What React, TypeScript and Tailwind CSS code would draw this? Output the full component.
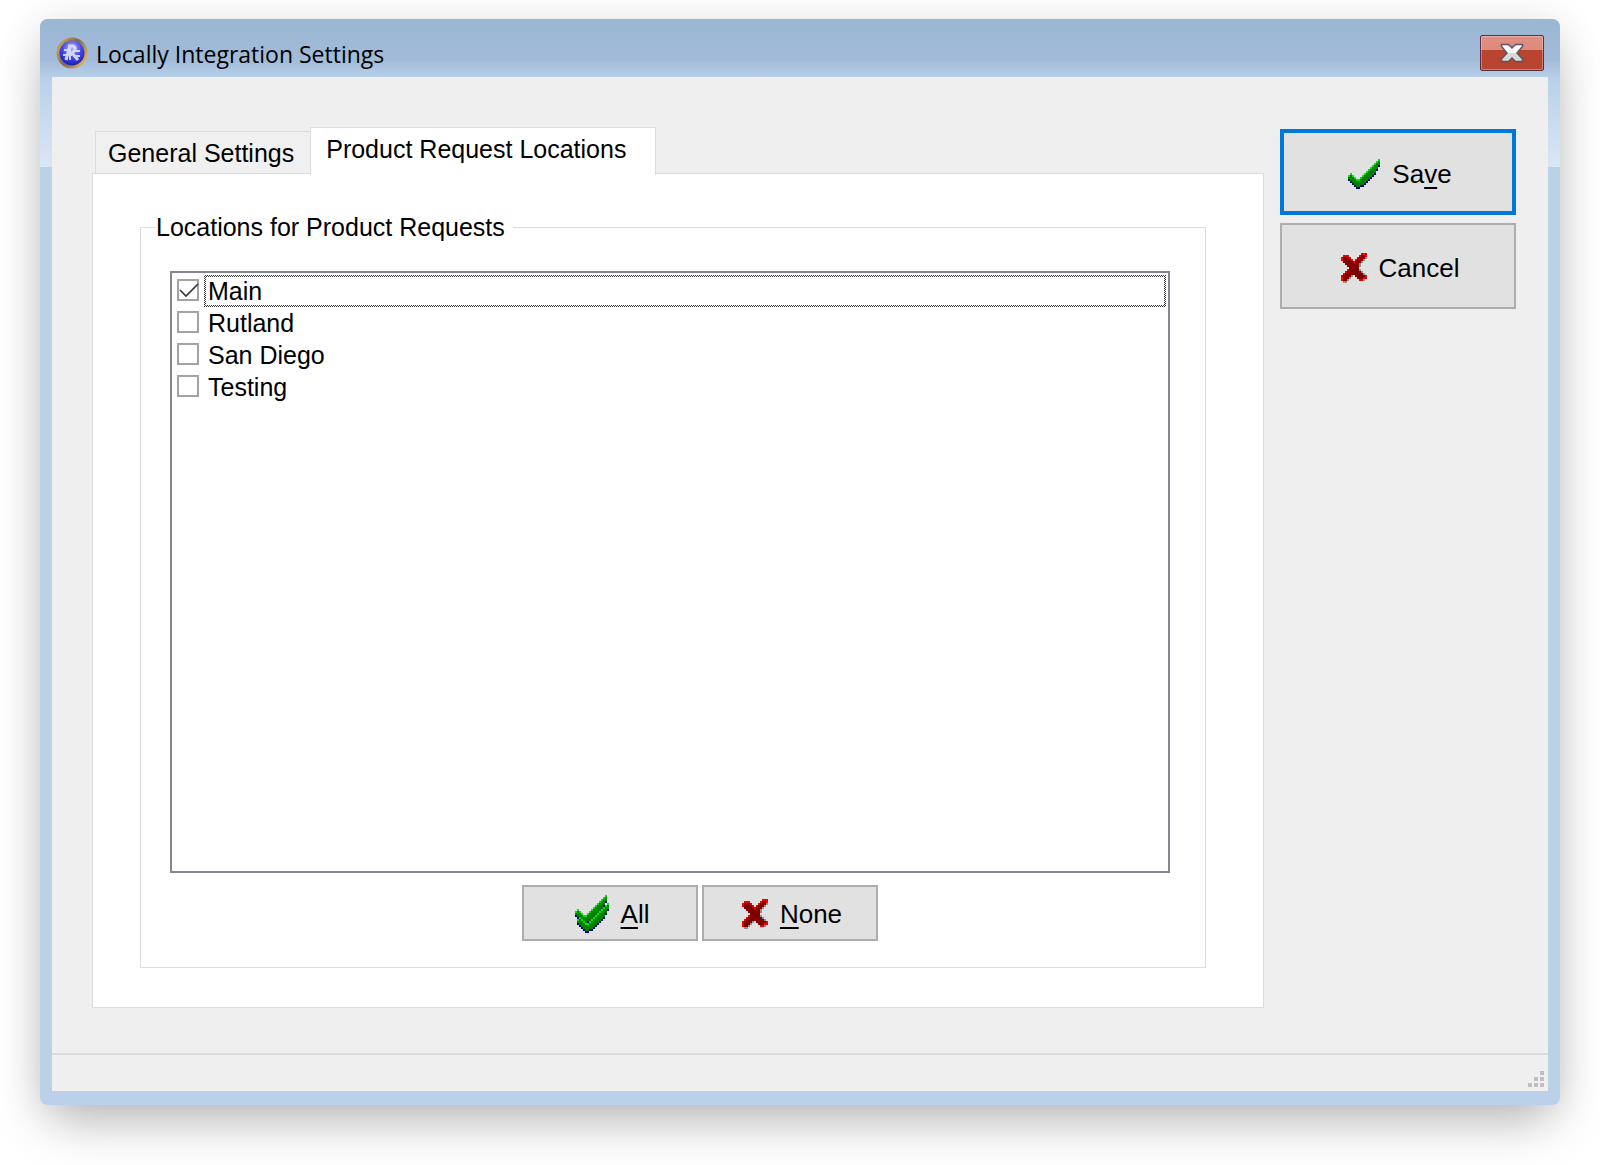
import { useState } from 'react';

const TABS = ['General Settings', 'Product Request Locations'];

const LOCATIONS = [
  { id: 'main', name: 'Main', checked: true },
  { id: 'rutland', name: 'Rutland', checked: false },
  { id: 'san-diego', name: 'San Diego', checked: false },
  { id: 'testing', name: 'Testing', checked: false },
];

// First and last filled row of every column of the 16x15 check bitmap
const CHECK_COLUMNS = [
  [8, 10], [7, 11], [8, 12], [9, 13], [10, 14], [10, 14], [9, 13], [8, 13],
  [7, 12], [6, 11], [5, 10], [4, 9], [3, 8], [2, 7], [1, 5], [0, 3],
];

// R = bright edge, D = body, G = shadow
const CROSS_ROWS = [
  '..........RRR',
  '.RRR.....RDDR',
  'RDDDR...RDDDG',
  'RDDDDR.RDDDG.',
  '.DDDDDRDDDG..',
  '..DDDDDDDG...',
  '...DDDDDDG...',
  '....DDDDD....',
  '...RDDDDDG...',
  '..RDDDDDDDG..',
  '.RDDDDDDDDDG.',
  'RDDDDG.DDDDDR',
  'RDDDG...DDDRR',
  'RDDG.....RRG.',
  '.GG..........',
];

const CROSS_COLORS: Record<string, string> = { R: '#f00000', D: '#800000', G: '#909090' };

function AppIcon() {
  return (
    <svg className="size-8 shrink-0" viewBox="0 0 32 32" aria-hidden="true">
      <defs>
        <linearGradient id="ring" x1="0" y1="0" x2="1" y2="0.6">
          <stop offset="0" stopColor="#7d6d50" />
          <stop offset="0.2" stopColor="#c39a55" />
          <stop offset="0.55" stopColor="#7b6a4c" />
          <stop offset="1" stopColor="#e0ae5c" />
        </linearGradient>
        <radialGradient id="globe" cx="0.5" cy="0.3" r="0.7">
          <stop offset="0" stopColor="#b4b6f0" />
          <stop offset="0.55" stopColor="#4347e8" />
          <stop offset="1" stopColor="#1a1cae" />
        </radialGradient>
      </defs>
      <circle cx="16" cy="16" r="15.5" fill="url(#ring)" />
      <circle cx="16" cy="16" r="12.5" fill="url(#globe)" />
      <g fill="none" stroke="#dddff8" opacity="0.9">
        <path d="M14 8l-4 15M12 9h5q3 1 2 4l-3 3 6 7" strokeWidth="3" />
        <path d="M8 13h7M18 14h6M7 18h9M17 19h7M14 9v14" strokeWidth="2" />
      </g>
    </svg>
  );
}

function CheckMark() {
  return (
    <>
      {CHECK_COLUMNS.map(([top, bottom], x) => (
        <g key={x}>
          <rect x={x} y={top} width="1" height="1" fill="#00e800" />
          <rect x={x} y={top + 1} width="1" height={bottom - top - 1} fill="#008000" />
          <rect x={x} y={bottom} width="1" height="1" fill="#000080" />
        </g>
      ))}
    </>
  );
}

function CheckIcon() {
  return (
    <svg width="32" height="30" viewBox="0 0 16 15" shapeRendering="crispEdges" aria-hidden="true">
      <CheckMark />
    </svg>
  );
}

function DoubleCheckIcon() {
  return (
    <svg width="34" height="38" viewBox="0 0 17 19" shapeRendering="crispEdges" aria-hidden="true">
      <CheckMark />
      <g transform="translate(1 4)">
        <CheckMark />
      </g>
    </svg>
  );
}

function CrossIcon() {
  return (
    <svg width="26" height="30" viewBox="0 0 13 15" shapeRendering="crispEdges" aria-hidden="true">
      {CROSS_ROWS.map((row, y) =>
        [...row].map((c, x) =>
          c === '.' ? null : <rect key={`${x}-${y}`} x={x} y={y} width="1" height="1" fill={CROSS_COLORS[c]} />
        )
      )}
    </svg>
  );
}

function CloseIcon() {
  return (
    <svg width="24" height="20" viewBox="0 0 24 20" aria-hidden="true">
      <defs>
        <linearGradient id="closeX" x1="0" y1="0" x2="0" y2="1">
          <stop offset="0.5" stopColor="#ffffff" />
          <stop offset="0.5" stopColor="#d9d9d9" />
        </linearGradient>
      </defs>
      <path
        d="M1.500 1.500H8.500L12 5l3.500-3.500h7v2L17 10l5.500 6v2.500h-7L12 15l-3.500 3.500h-7V16L7 10 1.500 3.500z"
        fill="url(#closeX)"
        stroke="#5b5560"
        strokeWidth="1.500"
      />
    </svg>
  );
}

function SizeGrip() {
  return (
    <svg width="16" height="16" viewBox="0 0 16 16" fill="#bfbfbf" aria-hidden="true">
      <path d="M12 0h4v4h-4zM6 6h4v4H6zM12 6h4v4h-4zM0 12h4v4H0zM6 12h4v4H6zM12 12h4v4h-4z" />
    </svg>
  );
}

export default function App() {
  const [activeTab, setActiveTab] = useState(1);
  const [locations, setLocations] = useState(LOCATIONS);
  const [focused, setFocused] = useState('main');

  const toggle = (id: string) => {
    setFocused(id);
    setLocations(locations.map((l) => (l.id === id ? { ...l, checked: !l.checked } : l)));
  };

  const setAll = (checked: boolean) => setLocations(locations.map((l) => ({ ...l, checked })));

  const smallButton = 'flex h-14 w-44 items-center justify-center gap-3 border-2 border-[#adadad] bg-[#e1e1e1] pt-0.5 pl-1';
  const largeButton = 'flex h-[86px] items-center justify-center gap-3 bg-[#e1e1e1] pt-1 pl-1';

  return (
    <div className="flex min-h-screen flex-col bg-white px-10 pt-[19px] pb-[60px] font-['Liberation_Sans',Arial,sans-serif] text-[25px] leading-8 text-black">
      <div className="flex grow flex-col rounded-lg bg-[#bad0eb] shadow-[0_24px_50px_-10px_rgba(0,0,0,0.26),0_4px_40px_rgba(0,0,0,0.1)]">
        {/* Title bar */}
        <header className="flex h-[58px] shrink-0 items-center gap-2 rounded-t-lg bg-linear-to-b from-[#9bb6d3] via-[#a1bbd8] via-70% to-[#b7cfe9] px-4 pt-2.5 pb-px">
          <AppIcon />
          <h1 className="grow pt-0.5 font-['Open_Sans','Segoe_UI',sans-serif] text-[23px]">Locally Integration Settings</h1>
          <button
            type="button"
            aria-label="Close"
            className="flex h-9 w-16 items-center justify-center rounded-xs border border-[#5a3040] bg-linear-to-b from-[#e08f83] from-0% via-[#dd8a7d] via-40% to-[#b94430] to-40% shadow-[inset_0_0_0_1px_#ffffff50]"
          >
            <CloseIcon />
          </button>
        </header>

        <div className="flex grow flex-col bg-linear-to-b from-[#b9cfea] via-[#dae7f4] via-[90px] to-[#bad1e8] to-[90px] px-3">
          <div className="flex grow flex-col bg-[#efefef]">
            <main className="flex grow gap-4 px-10 pt-[50px] pr-8 pb-[45px]">
              {/* Tabs */}
              <div className="flex grow flex-col">
                <div role="tablist" className="relative z-10 -mb-0.5 flex items-end pl-[3px]">
                  {TABS.map((tab, idx) => (
                    <button
                      key={tab}
                      type="button"
                      role="tab"
                      aria-selected={idx === activeTab}
                      onClick={() => setActiveTab(idx)}
                      className={
                        idx === activeTab
                          ? 'h-12 border border-b-0 border-[#dcdcdc] bg-white pr-[29px] pb-1.5 pl-[15px]'
                          : 'mb-0.5 h-[42px] border border-r-0 border-b-0 border-[#dcdcdc] bg-[#f0f0f0] pr-4 pl-3'
                      }
                    >
                      {tab}
                    </button>
                  ))}
                </div>

                <div role="tabpanel" className="flex grow flex-col border border-[#dcdcdc] bg-white pt-[37px] pr-[57px] pb-[39px] pl-[47px]">
                  <fieldset className="flex grow flex-col border border-[#dcdcdc] pr-[35px] pb-[26px] pl-[29px]">
                    <legend className="-ml-[14px] pr-2">Locations for Product Requests</legend>

                    <div className="mt-7 flex grow flex-col border-2 border-[#828790] pt-0.5 pr-0.5 pl-[5px]">
                      {locations.map((loc) => (
                        <div key={loc.id} className="flex h-8 items-center gap-[5px]">
                          <span className="relative -mt-0.5 size-[22px] shrink-0">
                            <input
                              id={loc.id}
                              type="checkbox"
                              checked={loc.checked}
                              onChange={() => toggle(loc.id)}
                              className="block size-[22px] appearance-none border-2 border-[#a3a3a3] bg-white"
                            />
                            {loc.checked && (
                              <svg className="pointer-events-none absolute inset-0" viewBox="0 0 22 22" aria-hidden="true">
                                <path d="M3 11l6 6L21 5" fill="none" stroke="#333" strokeWidth="1.6" />
                              </svg>
                            )}
                          </span>
                          <label
                            htmlFor={loc.id}
                            className={
                              loc.id === focused
                                ? 'flex h-8 grow bg-[repeating-conic-gradient(#333_0_25%,#fff_0_50%)] bg-[length:2px_2px] p-0.5'
                                : 'flex h-8 grow p-0.5'
                            }
                          >
                            <span className="flex grow items-center bg-white pl-0.5">{loc.name}</span>
                          </label>
                        </div>
                      ))}
                    </div>

                    <div className="mt-3 flex justify-center gap-1 pl-[60px] text-[26px]">
                      <button type="button" onClick={() => setAll(true)} className={smallButton}>
                        <DoubleCheckIcon />
                        <span><u className="underline-offset-4">A</u>ll</span>
                      </button>
                      <button type="button" onClick={() => setAll(false)} className={smallButton}>
                        <CrossIcon />
                        <span><u className="underline-offset-4">N</u>one</span>
                      </button>
                    </div>
                  </fieldset>
                </div>
              </div>

              {/* Actions */}
              <div className="flex w-[236px] shrink-0 flex-col gap-2 pt-0.5 text-[26px]">
                <button type="button" className={`${largeButton} border-4 border-[#0078d7]`}>
                  <CheckIcon />
                  <span>Sa<u className="underline-offset-4">v</u>e</span>
                </button>
                <button type="button" className={`${largeButton} border-2 border-[#adadad]`}>
                  <CrossIcon />
                  Cancel
                </button>
              </div>
            </main>

            {/* Status bar */}
            <footer className="flex h-[38px] items-end justify-end border-t-2 border-[#dcdcdc] p-1">
              <SizeGrip />
            </footer>
          </div>
        </div>
        <div className="h-[14px]" />
      </div>
    </div>
  );
}
